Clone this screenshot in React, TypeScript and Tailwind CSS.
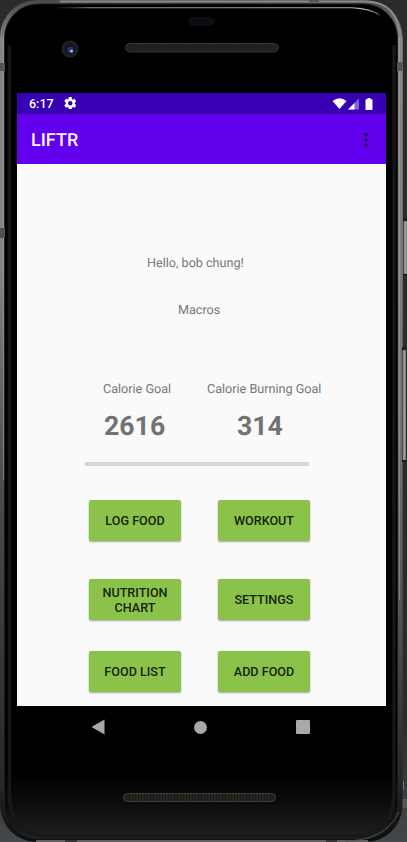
import React from 'react';

function DeviceCasing() {
  return (
    <svg className="absolute inset-0" width="407" height="842" viewBox="0 0 407 842" aria-hidden="true">
      <defs>
        <linearGradient id="rim" x1="0" y1="0" x2="0" y2="1">
          <stop offset="0" stopColor="#4a4a4a" />
          <stop offset="0.05" stopColor="#858585" />
          <stop offset="0.3" stopColor="#8a8a8a" />
          <stop offset="0.45" stopColor="#626262" />
          <stop offset="0.6" stopColor="#444" />
          <stop offset="0.8" stopColor="#303030" />
          <stop offset="0.94" stopColor="#222" />
          <stop offset="1" stopColor="#0d0d0d" />
        </linearGradient>
        <linearGradient id="sideLeft" gradientUnits="userSpaceOnUse" x1="0" y1="30" x2="0" y2="800">
          <stop offset="0" stopColor="#858585" />
          <stop offset="0.3" stopColor="#858585" />
          <stop offset="0.6" stopColor="#4a4a4a" />
          <stop offset="1" stopColor="#262626" />
        </linearGradient>
        <linearGradient id="sideRight" gradientUnits="userSpaceOnUse" x1="0" y1="30" x2="0" y2="800">
          <stop offset="0" stopColor="#888" />
          <stop offset="0.5" stopColor="#747474" />
          <stop offset="0.75" stopColor="#555" />
          <stop offset="1" stopColor="#222" />
        </linearGradient>
        <linearGradient id="glass" x1="0" y1="0" x2="0" y2="1">
          <stop offset="0" stopColor="#000" />
          <stop offset="0.92" stopColor="#000" />
          <stop offset="0.96" stopColor="#0d0d0d" />
          <stop offset="1" stopColor="#212121" />
        </linearGradient>
        <linearGradient id="shine" gradientUnits="userSpaceOnUse" x1="50" y1="0" x2="381" y2="0">
          <stop offset="0" stopColor="#555" stopOpacity="0" />
          <stop offset="0.12" stopColor="#8a8a84" />
          <stop offset="1" stopColor="#b5b5b0" />
        </linearGradient>
        <linearGradient id="key" x1="0" y1="0" x2="1" y2="0">
          <stop offset="0" stopColor="#777" />
          <stop offset="0.5" stopColor="#a0a09e" />
          <stop offset="1" stopColor="#777" />
        </linearGradient>
        <pattern id="mesh" width="3" height="3" patternUnits="userSpaceOnUse">
          <rect width="3" height="3" fill="#242424" />
          <rect width="1" height="3" fill="#1b1b1b" />
        </pattern>
        <pattern id="meshLow" width="3" height="3" patternUnits="userSpaceOnUse">
          <rect width="3" height="3" fill="#26251f" />
          <rect width="1" height="3" fill="#171713" />
        </pattern>
      </defs>
      <rect x="0" y="0" width="402.500" height="842" rx="37" fill="url(#rim)" />
      <rect x="5" y="4" width="392" height="835" rx="33" fill="#111" />
      <path d="M0 37H5V790H0z" fill="url(#sideLeft)" />
      <path d="M397 37h5.500V790H397z" fill="url(#sideRight)" />
      <path d="M3.500 35V480" stroke="#a0a0a0" strokeOpacity="0.6" />
      <path d="M399.500 35V600" stroke="#a5a5a5" strokeOpacity="0.5" />
      <path d="M60 1.500H366Q398 2 400 37" fill="none" stroke="#8a8a8a" strokeWidth="2" />
      <rect x="4.500" y="4" width="393" height="835" rx="34" fill="url(#glass)" stroke="#1b1b1b" />
      <path d="M9.500 45V795M394 45V795" stroke="#161616" strokeWidth="3.500" />
      <path d="M9.500 794Q10 834 44 836H358Q393 834 394 794" fill="none" stroke="#181818" strokeWidth="3.500" />
      <path d="M50 7.200H352Q372 8 381 16Q371 9.500 352 8.300H50Z" fill="url(#shine)" />
      <path d="M0 63h5v8H0zM397 62h5.500v9h-5.500zM309 0h10v2h-10z" fill="#555" />
      <path d="M0 228h5v10H0z" fill="#4f4f4f" />
      <path d="M36 841H368" stroke="#606060" strokeWidth="2" />
      <path d="M345 841Q385 841 399 812" fill="none" stroke="#4e4e4e" />
      <path d="M65 840h12v2H65zM326 840h11v2h-11z" fill="#343434" />

      <rect x="403" y="218" width="4" height="58" fill="#1c1c1c" />
      <rect x="403.500" y="221" width="3.500" height="53" rx="1" fill="url(#key)" />
      <rect x="402" y="347" width="4" height="115" fill="#1c1c1c" />
      <rect x="402.500" y="350" width="3.500" height="110" rx="1" fill="url(#key)" />
      <rect x="403" y="781" width="1" height="9" fill="#777" />
      <rect x="402.500" y="799" width="4.500" height="9" fill="#555" />

      <rect x="188.500" y="17" width="26" height="9" rx="4.500" fill="#0d0d11" />
      <circle cx="70" cy="49" r="8" fill="#1d1d1f" stroke="#292929" />
      <circle cx="70" cy="49" r="5" fill="#101329" />
      <circle cx="70.500" cy="50" r="3.200" fill="#27356f" />
      <circle cx="71.500" cy="51.200" r="1.400" fill="#aebcf5" />
      <rect x="125.500" y="43.500" width="153" height="8.500" rx="4.250" fill="url(#mesh)" stroke="#343434" />
      <rect x="123.500" y="793.500" width="152" height="8" rx="4" fill="url(#meshLow)" stroke="#3e3e3b" />
    </svg>
  );
}

function StatusBar() {
  return (
    <div className="flex h-[21px] items-center bg-[#3700b3] pl-3 pr-3 text-white">
      <span className="w-[35px] pt-[2px] text-[12.5px] leading-[21px] font-medium">6:17</span>
      <svg className="-mt-px" width="12.500" height="12.500" viewBox="2 2 20 20" fill="currentColor">
        <path d="M19.140 12.940c.040-.3.060-.61.060-.94s-.020-.64-.070-.94l2.030-1.580a.49.49 0 0 0 .120-.61l-1.920-3.320a.49.49 0 0 0-.59-.22l-2.390.96a7 7 0 0 0-1.620-.94l-.36-2.540A.48.48 0 0 0 13.920 2h-3.840a.48.48 0 0 0-.47.410l-.36 2.540a7 7 0 0 0-1.620.94l-2.390-.96a.49.49 0 0 0-.59.220L2.740 8.470a.48.48 0 0 0 .120.610l2.030 1.580a7 7 0 0 0 0 2.680l-2.030 1.580a.49.49 0 0 0-.120.610l1.920 3.320c.120.220.37.290.59.220l2.390-.96c.5.380 1.030.7 1.620.94l.36 2.540c.050.24.24.410.47.410h3.840c.24 0 .44-.17.47-.41l.36-2.540a7 7 0 0 0 1.620-.94l2.390.96c.22.080.47 0 .59-.22l1.920-3.320a.49.49 0 0 0-.12-.61zM12 15.600A3.600 3.600 0 1 1 12 8.400a3.600 3.600 0 0 1 0 7.200" />
      </svg>
      <svg className="ml-auto" width="42" height="14" viewBox="0 0 42 14">
        <path d="M.5 4Q7.500-1.500 14.500 4L7.500 12Z" fill="#fff" />
        <path d="M27 1.500V12.500H16Z" fill="#8565d2" />
        <path d="M22.500 6V12.500H16Z" fill="#fff" />
        <path d="M35.500 1h3v1.300h1.300q.7 0 .7.700v9.300q0 .7-.7.700h-5.600q-.7 0-.7-.7V3q0-.7.7-.7h1.300z" fill="#fff" />
      </svg>
    </div>
  );
}

function AppBar() {
  return (
    <div className="flex h-[50px] items-center justify-between bg-[#6200ee] pl-[14px] pr-[17px] pt-[2px]">
      <h1 className="pt-[2px] text-[18px] leading-6 font-medium text-[#fbf3ff]">LIFTR</h1>
      <button aria-label="More options">
        <svg width="6" height="16" viewBox="0 0 6 16" fill="#2a0873">
          <circle cx="3" cy="2.500" r="1.900" />
          <circle cx="3" cy="7.800" r="1.900" />
          <circle cx="3" cy="13.100" r="1.900" />
        </svg>
      </button>
    </div>
  );
}

function Action({ children }: { children: React.ReactNode }) {
  return (
    <button className="h-[41px] w-[92px] rounded-[2px] bg-[#8bc34a] text-center text-[12.6px] leading-[15px] font-medium text-[#16230a] shadow-[0_1px_2px_rgba(0,0,0,0.35)]">
      {children}
    </button>
  );
}

export default function App() {
  return (
    <div className="relative h-[842px] w-[407px] overflow-hidden bg-linear-to-b from-[#2b2b2b] from-85% to-[#42484b] pl-[17px] pt-[93px] font-['Roboto',sans-serif] [text-rendering:geometricPrecision]">
      <DeviceCasing />
      <div className="relative w-[369px]">
        <StatusBar />
        <AppBar />
        <main className="h-[542px] bg-[#fafafa] pt-[91px] text-[12.6px] leading-[18px] text-[#777]">
          <p className="pl-[130px]">Hello, bob chung!</p>
          <p className="mt-[29px] pl-[161px]">Macros</p>
          <div className="mt-[61px] flex pl-[68px]">
            <section className="w-[104px] pl-[18px]">
              <h2 className="whitespace-nowrap">Calorie Goal</h2>
              <p className="mt-[11px] pl-px text-[26.7px] leading-8 font-bold text-[#737373]">2616</p>
            </section>
            <section className="pl-[18px]">
              <h2 className="whitespace-nowrap">Calorie Burning Goal</h2>
              <p className="mt-[11px] pl-[30px] text-[26.7px] leading-8 font-bold text-[#737373]">314</p>
            </section>
          </div>
          <div className="mt-[20px] ml-[68px] h-[4px] w-[224px] bg-[#d6d6d6]" />
          <div className="mt-[34px] ml-[72px] grid w-[221px] grid-cols-[92px_92px] gap-x-[37px]">
            <Action>LOG FOOD</Action>
            <Action>WORKOUT</Action>
            <div className="mt-[38px]"><Action>NUTRITION<br />CHART</Action></div>
            <div className="mt-[38px]"><Action>SETTINGS</Action></div>
            <div className="mt-[31px]"><Action>FOOD LIST</Action></div>
            <div className="mt-[31px]"><Action>ADD FOOD</Action></div>
          </div>
        </main>
        <nav className="flex h-[42px] items-center justify-between pl-[74px] pr-[76px]">
          <svg width="14" height="16" viewBox="0 0 14 16" fill="#a8a8a8"><path d="M13.500.5v15L.5 8z" /></svg>
          <div className="size-[13px] rounded-full bg-[#a8a8a8]" />
          <div className="size-[14px] rounded-[1px] bg-[#a8a8a8]" />
        </nav>
      </div>
    </div>
  );
}
